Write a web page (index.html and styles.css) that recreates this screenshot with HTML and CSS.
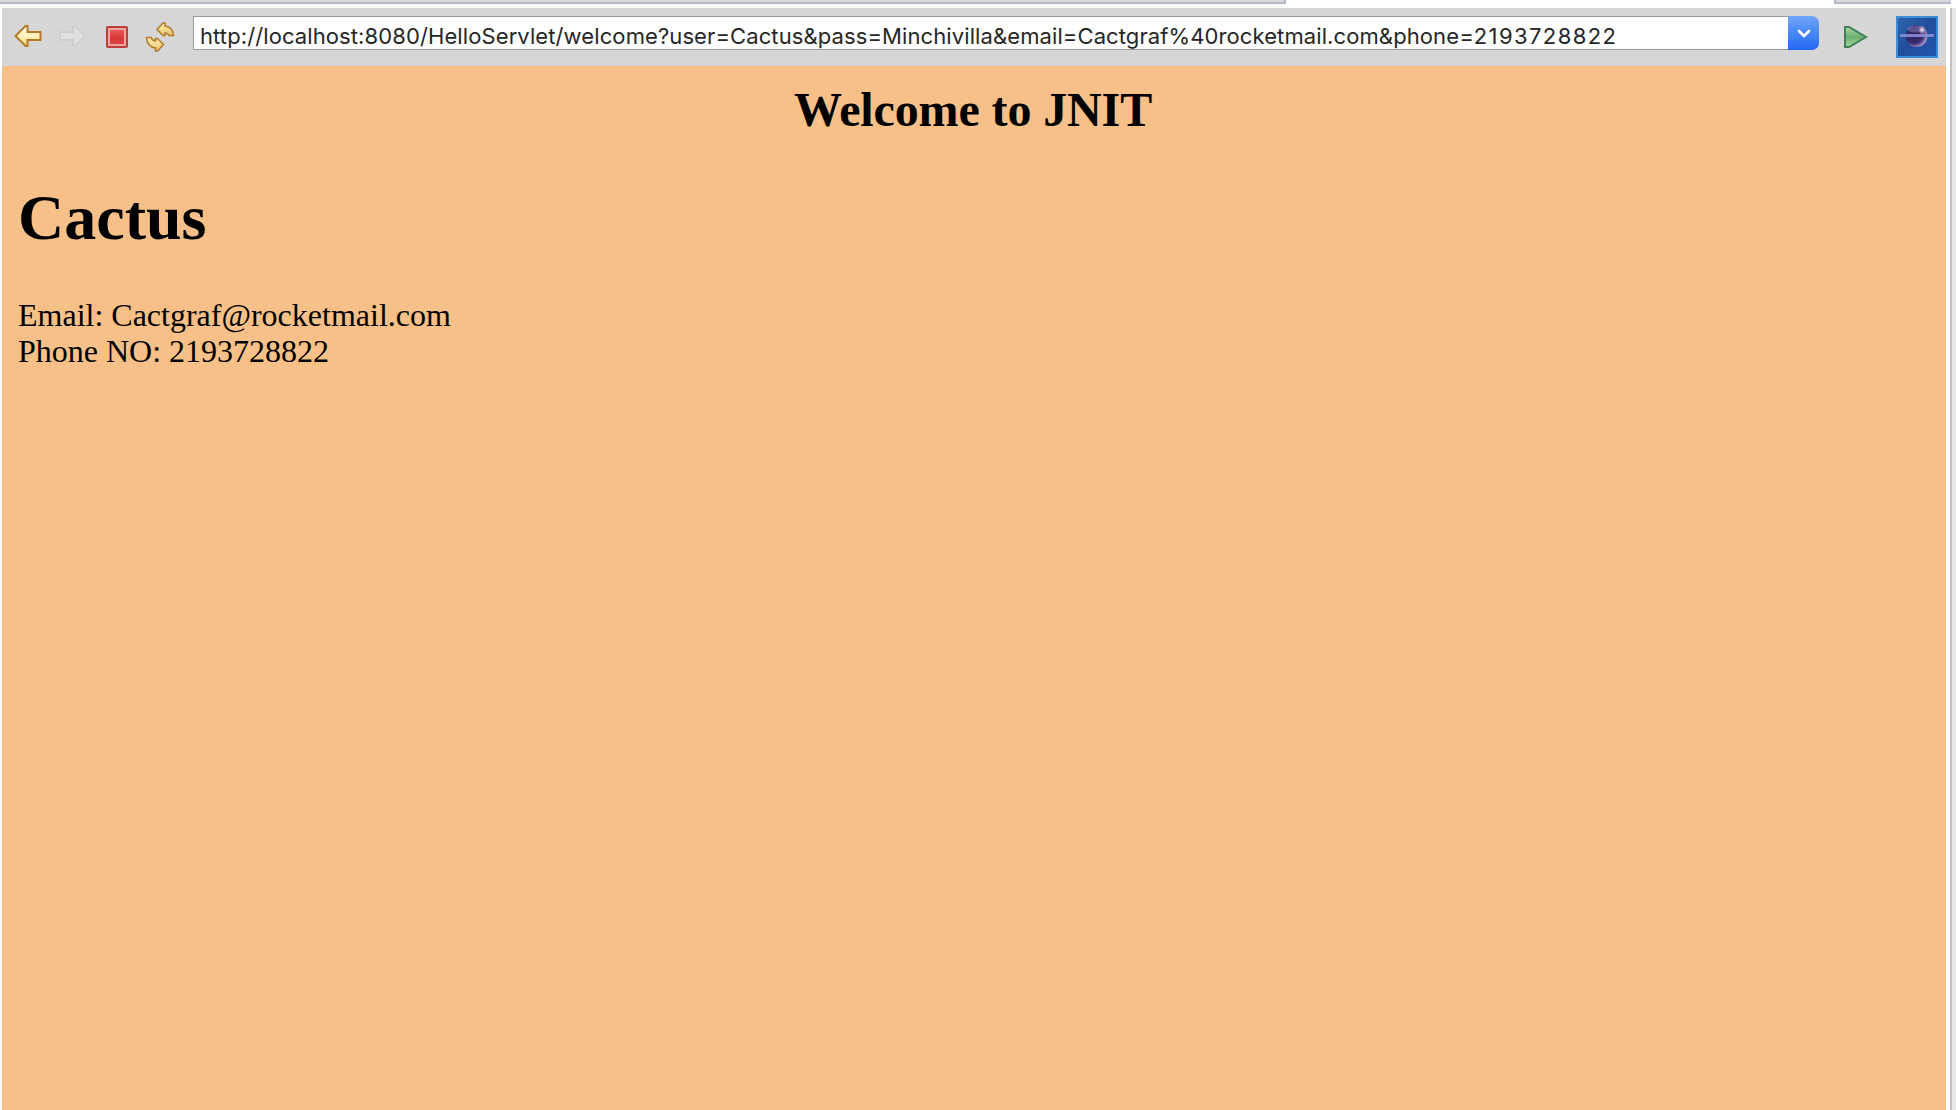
FILE: index.html
```html
<!DOCTYPE html>
<html lang="en">
<head>
<meta charset="utf-8">
<title>Welcome</title>
<link rel="stylesheet" href="styles.css">
</head>
<body>
<div class="tabs"><div class="tab-left"></div><div class="tab-right"></div></div>
<div class="frame">
<div class="browser">
<header class="toolbar">
<svg class="icon back" width="30" height="26" viewBox="0 0 30 26"><defs><linearGradient id="gold" x2="0" y2="1"><stop stop-color="#fffce9"/><stop offset=".55" stop-color="#fff2b8"/><stop offset="1" stop-color="#edcb72"/></linearGradient></defs><path d="M2.500 13 12.500 3h2v6h13v8h-13v6h-2Z" fill="url(#gold)" stroke="#b27b24" stroke-width="2"/></svg>
<svg class="icon forward" width="30" height="26" viewBox="0 0 30 26"><path d="M28 13 18 3h-2v6H3v8h13v6h2Z" fill="#dfdfdd" stroke="#cbcbcb" stroke-width="1.5"/></svg>
<svg class="icon stop" width="22" height="22" viewBox="0 0 22 22"><defs><linearGradient id="red" x2="0" y2="1"><stop stop-color="#e25a55"/><stop offset=".6" stop-color="#d43737"/><stop offset="1" stop-color="#dc4544"/></linearGradient></defs><rect x="1" y="1" width="20" height="20" rx="1" fill="#eea69f" stroke="#bb3e3b" stroke-width="2"/><rect x="4" y="4" width="14" height="14" fill="url(#red)"/></svg>
<svg class="icon refresh" width="30" height="32" viewBox="0 0 30 32"><defs><linearGradient id="amber" x2="0" y2="1"><stop stop-color="#fff1b5"/><stop offset="1" stop-color="#ebc46c"/></linearGradient></defs><g fill="url(#amber)" stroke="#b07c2b" stroke-width="1.6"><path d="M12 8.500 18 2h2v3q8 1 8.500 9.500H24Q23 12 20 12v2.500h-2Z"/><path d="M18.500 23.500 12.500 30h-2v-3Q2 26 1.500 16.500H6q1 3 4.500 3.500V17.500h2Z"/></g></svg>
<div class="address"><div class="url">http://localhost:8080/HelloServlet/welcome?user=Cactus&amp;pass=Minchivilla&amp;email=Cactgraf%40rocketmail.com&amp;phone=<span class="digits">2193728822</span></div><div class="dropdown"><svg width="14" height="9" viewBox="0 0 14 9"><path d="m2 2 5 5 5-5" fill="none" stroke="#fff" stroke-width="2.6" stroke-linecap="round" stroke-linejoin="round"/></svg></div></div>
<svg class="icon go" width="26" height="24" viewBox="0 0 26 24"><defs><linearGradient id="green" x2="0" y2="1"><stop stop-color="#b4d8a4"/><stop offset=".5" stop-color="#6bb06e"/><stop offset="1" stop-color="#b0d69c"/></linearGradient></defs><path d="M2 2h4l17 10L6 22H2Z" fill="url(#green)" stroke="#3d805a" stroke-width="2"/></svg>
<svg class="icon globe" width="42" height="42" viewBox="0 0 42 42"><defs><linearGradient id="space" x2="1" y2="1"><stop stop-color="#2c66ad"/><stop offset=".5" stop-color="#204d9c"/><stop offset="1" stop-color="#2259ae"/></linearGradient><radialGradient id="planet" cx=".38" cy=".42" r=".65"><stop stop-color="#29205e"/><stop offset=".65" stop-color="#3a2c70"/><stop offset="1" stop-color="#c2a4de"/></radialGradient><radialGradient id="shine"><stop stop-color="#fff"/><stop offset="1" stop-color="#b9a8d6" stop-opacity="0"/></radialGradient></defs><rect x="1" y="1" width="40" height="40" fill="url(#space)" stroke="#3e8bd6" stroke-width="2"/><circle cx="20.500" cy="20" r="11" fill="url(#planet)"/><ellipse cx="19" cy="13" rx="8" ry="3.500" fill="#8272b0" opacity=".55"/><ellipse cx="26" cy="14" rx="4" ry="5" fill="url(#shine)"/><path d="M4 18h34v3H4Z" fill="#8f8fd6" opacity=".85"/></svg>
</header>
<main class="page">
<h2 class="welcome">Welcome to JNIT</h2>
<h1 class="name">Cactus</h1>
<p class="details">Email: Cactgraf@rocketmail.com<br>Phone NO: 2193728822</p>
</main>
</div>
<div class="edge"></div>
</div>
</body>
</html>
```
FILE: styles.css
```css
* { box-sizing: border-box; }
body { margin: 0; height: 1110px; background: #fff; overflow: hidden; }
.tabs { height: 8px; display: flex; justify-content: space-between; padding-right: 5px; }
.tab-left, .tab-right { height: 4px; background: #d8d8d8; border-bottom: 2px solid #b5bbcf; border-right: 2px solid #b5bbcf; }
.tab-left { width: 1286px; }
.tab-right { width: 117px; border-right: 0; border-left: 2px solid #b5bbcf; }
.frame { display: flex; height: 1102px; padding-left: 2px; }
.browser { width: 1944px; display: flex; flex-direction: column; }
.toolbar { height: 58px; background: #d6d6d6; display: flex; align-items: flex-start; padding: 8px 0 0 11px; }
.icon { flex: none; display: block; }
.back { margin-top: 7px; }
.forward { margin: 7px 0 0 14px; }
.stop { margin: 10px 0 0 19px; }
.refresh { margin: 5px 0 0 17px; }
.address { width: 1626px; height: 34px; margin-left: 18px; display: flex; }
.url { flex: 1; border: 1px solid #9b9b9b; border-right: 0; background: #fff; color: #262626; font: 22px/39px Inter, sans-serif; padding-left: 6px; white-space: nowrap; letter-spacing: .1px; }
.digits { letter-spacing: 1.4px; }
.dropdown { width: 31px; border-radius: 0 7px 7px 0; background: linear-gradient(#70a5f7, #2368f5); display: flex; align-items: center; justify-content: center; }
.go { margin: 9px 0 0 24px; }
.globe { margin-left: 27px; }
.page { flex: 1; background: #f6c088; color: #000; font-family: "Liberation Serif", serif; padding: 16px 18px 16px 16px; }
.welcome { margin: 0; font-size: 48px; line-height: 55px; text-align: center; letter-spacing: -.12px; }
.name { margin: 44px 0 0; font-size: 64px; line-height: 74px; }
.details { margin: 42px 0 0; font-size: 32px; line-height: 36px; }
.edge { margin-left: 4px; width: 6px; border-left: 2px solid #c2c3be; background: #e8e8e8; }
```
